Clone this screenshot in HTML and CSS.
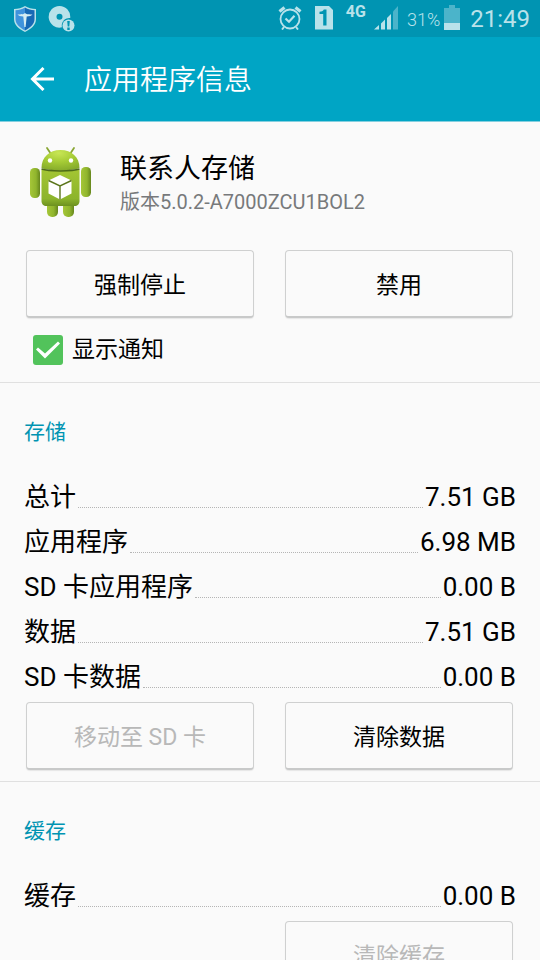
FILE: index.html
```html
<!DOCTYPE html>
<html lang="zh-CN">
<head>
<meta charset="utf-8">
<meta name="viewport" content="width=device-width, initial-scale=1">
<title>应用程序信息</title>
<link rel="stylesheet" href="styles.css">
</head>
<body>
<div class="screen">
  <div class="status">
    <div class="status-left">
      <svg width="24" height="28" viewBox="0 0 24 28" aria-hidden="true">
        <path d="M12 1C9 3 5 4 1 4v10c0 6 5 10 11 13 6-3 11-7 11-13V4c-4 0-8-1-11-3z" fill="#b9e2ea"/>
        <path d="M12 2.500C9 4.500 6 5 2.500 5.200V14c0 5.500 4.500 8.800 9.500 11.500z" fill="#3f93dc"/>
        <path d="M12 2.500c3 2 6 2.500 9.500 2.700V14c0 5.500-4.500 8.800-9.500 11.500z" fill="#1769b5"/>
        <path d="M4.500 9.500c2.500 0 5-.2 6.500-.8L12 8l1 .7c1.500.6 4 .8 6.500.8-1 1.400-3 1.800-5.800 2L12.600 22h-1.200l-1.100-10.500c-2.800-.2-4.800-.6-5.800-2z" fill="#d5edf2"/>
      </svg>
      <svg width="28" height="28" viewBox="0 0 28 28" aria-hidden="true">
        <path d="M11.500 1a10.800 10.800 0 1 0 2.500 21.300A7.500 7.500 0 0 1 22.200 13 10.800 10.800 0 0 0 11.500 1zm0 7.800a3 3 0 1 1 0 6 3 3 0 0 1 0-6z" fill="#b9e2ea" fill-rule="evenodd"/>
        <circle cx="20.500" cy="20.500" r="6" fill="#b9e2ea"/>
        <path d="M19.200 16h2.600l-.5 5.500h-1.600zM19.300 22.600h2.400V25h-2.400z" fill="#0094b2"/>
      </svg>
    </div>
    <div class="status-right">
      <svg width="24" height="25" viewBox="0 0 24 25" fill="none" stroke="#b9e2ea" stroke-width="1.800" aria-hidden="true">
        <circle cx="12" cy="14" r="9.500"/>
        <path d="M7.500 13.500l3.500 3.300 5.500-6" stroke-width="2.200"/>
        <path d="M1.500 6.500l5-4M22.500 6.500l-5-4" stroke-width="3.200"/>
        <path d="M6 22l-2 2.500M18 22l2 2.500" stroke-width="2"/>
      </svg>
      <svg class="sim" width="20" height="25" viewBox="0 0 20 25" aria-hidden="true">
        <path d="M1 1h14l4 4v19.500H1z" fill="#b9e2ea"/>
        <path d="M5.500 9V6.800c2.200-.2 3.600-.8 4.300-2.300h2.700v16H9.200V8.900z" fill="#0094b2"/>
      </svg>
      <span class="net">4G</span>
      <svg class="signal" width="25" height="25" viewBox="0 0 25 25" aria-hidden="true">
        <path d="M0 24.500L5 20v4.500zM7 18.500l4-4v10H7zM13 13l4-4v15.500h-4z" fill="#b9e2ea"/>
        <path d="M19 6.500L24 1v23.500h-5z" fill="#4bb4ca"/>
      </svg>
      <span class="percent">31%</span>
      <svg class="battery" width="16" height="25" viewBox="0 0 16 25" aria-hidden="true">
        <path d="M5 0h6v3h5v22H0V3h5z" fill="#4bb4ca"/>
        <path d="M0 18h16v7H0z" fill="#b9e2ea"/>
      </svg>
      <span class="clock">21:49</span>
    </div>
  </div>

  <header class="bar">
    <button class="back" type="button" aria-label="返回">
      <svg width="24" height="24" viewBox="0 0 24 24" fill="none" stroke="#fff" stroke-width="3" aria-hidden="true">
        <path d="M24 12H2.500M13.500 1L2.500 12l11 11"/>
      </svg>
    </button>
    <h1 class="title">应用程序信息</h1>
  </header>

  <main>
    <section class="app">
      <div class="identity">
        <svg width="62" height="72" viewBox="0 0 62 72" aria-hidden="true">
          <defs>
            <linearGradient id="body" x1="0" y1="0" x2="0" y2="1">
              <stop offset="0" stop-color="#a3c533"/><stop offset=".8" stop-color="#8cb42c"/><stop offset="1" stop-color="#6d9120"/>
            </linearGradient>
            <linearGradient id="limb" x1="0" y1="0" x2="1" y2="0">
              <stop offset="0" stop-color="#a5c638"/><stop offset=".6" stop-color="#90b52d"/><stop offset="1" stop-color="#66861d"/>
            </linearGradient>
            <radialGradient id="head" cx=".45" cy=".15" r=".9">
              <stop offset="0" stop-color="#c8e655"/><stop offset=".5" stop-color="#a5cb35"/><stop offset="1" stop-color="#83a92a"/>
            </radialGradient>
          </defs>
          <path d="M18 2l4 6M45 2l-4 6" stroke="#89a633" stroke-width="1.800" stroke-linecap="round"/>
          <rect x="18" y="50" width="11" height="21" rx="5" fill="url(#limb)"/>
          <rect x="34" y="50" width="11" height="21" rx="5" fill="url(#limb)"/>
          <rect x="1" y="22" width="10" height="30" rx="4.500" fill="url(#limb)"/>
          <rect x="52" y="21" width="10" height="30" rx="4.500" fill="url(#limb)"/>
          <path d="M12.500 24h38v31c0 3-2 5-5 5h-28c-3 0-5-2-5-5z" fill="url(#body)"/>
          <path d="M12.500 22c0-11 8-18 19-18s19 7 19 18c-6 3-32 3-38 0z" fill="url(#head)"/>
          <path d="M12.500 23c7 2.500 31 2.500 38 0" fill="none" stroke="#4d6b18" stroke-width="1.500"/>
          <circle cx="21" cy="14.500" r="2.200" fill="#fff"/><circle cx="42" cy="14.500" r="2.200" fill="#fff"/>
          <path d="M31 29l11.500 5.500v13L31 53.500l-11.500-6v-13z" fill="#fff"/>
          <path d="M19.500 34.500L31 40l11.500-5.500M31 40v13.500" fill="none" stroke="#5c761c" stroke-width="1.400"/>
        </svg>
        <div class="names">
          <h2 class="name">联系人存储</h2>
          <p class="version">版本5.0.2-A7000ZCU1BOL2</p>
        </div>
      </div>
      <div class="actions">
        <button class="btn" type="button">强制停止</button>
        <button class="btn" type="button">禁用</button>
      </div>
      <label class="notify"><input class="check" type="checkbox" checked>显示通知</label>
    </section>

    <section class="group">
      <h3 class="heading">存储</h3>
      <dl class="rows">
        <div class="row"><dt>总计</dt><dd>7.51 GB</dd></div>
        <div class="row"><dt>应用程序</dt><dd>6.98 MB</dd></div>
        <div class="row"><dt>SD 卡应用程序</dt><dd>0.00 B</dd></div>
        <div class="row"><dt>数据</dt><dd>7.51 GB</dd></div>
        <div class="row"><dt>SD 卡数据</dt><dd>0.00 B</dd></div>
      </dl>
      <div class="actions">
        <button class="btn" type="button" disabled>移动至 SD 卡</button>
        <button class="btn" type="button">清除数据</button>
      </div>
    </section>

    <section class="group">
      <h3 class="heading">缓存</h3>
      <dl class="rows">
        <div class="row"><dt>缓存</dt><dd>0.00 B</dd></div>
      </dl>
      <div class="actions">
        <button class="btn last" type="button" disabled>清除缓存</button>
      </div>
    </section>
  </main>
</div>
</body>
</html>
```
FILE: styles.css
```css
* { box-sizing: border-box; }

body {
  margin: 0;
  background: #fafafa;
  color: #000;
  font-family: Roboto, "Noto Sans CJK SC", sans-serif;
  font-weight: 400;
}

h1, h2, h3, p, dl, dd { margin: 0; font-weight: inherit; }
svg { display: block; flex: none; }
button { font-family: inherit; font-weight: inherit; }

.screen { height: 100vh; overflow: hidden; }

.status {
  display: flex;
  justify-content: space-between;
  height: 37px;
  padding: 5px 10px 0 13px;
  background: #0094b2;
  color: #b9e2ea;
}
.status-left { display: flex; gap: 11px; }
.status-right { display: flex; }
.sim { margin-left: 12px; }
.net { margin-left: 12px; font-size: 16px; line-height: 14px; font-weight: 700; }
.signal { margin-left: 8px; }
.percent { margin-left: 8px; font-size: 18px; line-height: 29px; font-weight: 300; }
.battery { margin-left: 4px; }
.clock { margin-left: 10px; font-size: 24px; line-height: 28px; }

.bar {
  display: flex;
  align-items: center;
  gap: 30px;
  height: 85px;
  padding: 0 30px;
  background: #00a5c5;
  border-bottom: 1px solid #84cfdf;
  color: #fff;
}
.back { padding: 0; border: 0; background: none; }
.title { padding-top: 4px; font-size: 28px; line-height: 40px; font-weight: 350; }

.identity {
  display: flex;
  gap: 29px;
  padding: 24px 29px 0;
}
.names { padding-top: 3px; }
.name { font-size: 27px; line-height: 40px; }
.version { font-size: 20px; line-height: 26px; color: #77797b; }

.actions {
  display: grid;
  grid-template-columns: 1fr 1fr;
  gap: 31px;
  padding: 0 27px 0 26px;
}
.app .actions { margin-top: 32px; }
.btn {
  height: 68px;
  padding: 0 0 2px;
  border: 1px solid #cfd0d0;
  border-bottom: 2px solid #c8c9c9;
  border-radius: 4px;
  background: #fafafa;
  color: #000;
  font-size: 23px;
  box-shadow: 0 1px 1px #e6e6e6;
}
.btn:disabled { color: #b8b8b8; }
.last { grid-column: 2; }

.notify {
  display: flex;
  align-items: center;
  gap: 9px;
  padding: 14px 33px 15px;
  font-size: 23px;
  line-height: 35px;
}
.check {
  appearance: none;
  width: 30px;
  height: 30px;
  margin: 0;
  border-radius: 3px;
  background: #52c35b;
}
.check::before {
  content: "";
  display: block;
  height: 30px;
  background: #fff;
  clip-path: polygon(3px 15px, 5px 13px, 12px 19px, 25px 7px, 27px 9px, 12px 24px);
}

.group { border-top: 1px solid #e0e0e0; padding-bottom: 11px; }
.heading {
  padding: 34px 24px 27px;
  font-size: 21px;
  line-height: 30px;
  color: #0094b2;
}
.rows { padding: 0 24px 3px; }
.row {
  display: flex;
  align-items: center;
  height: 45px;
  font-size: 26px;
  line-height: 44px;
}
.row dt { display: flex; flex: 1; }
.row dt::after {
  content: "";
  flex: 1;
  height: 32px;
  margin: 0 2px 0 2px;
  border-bottom: 1px dotted #b5b5b5;
}
```
